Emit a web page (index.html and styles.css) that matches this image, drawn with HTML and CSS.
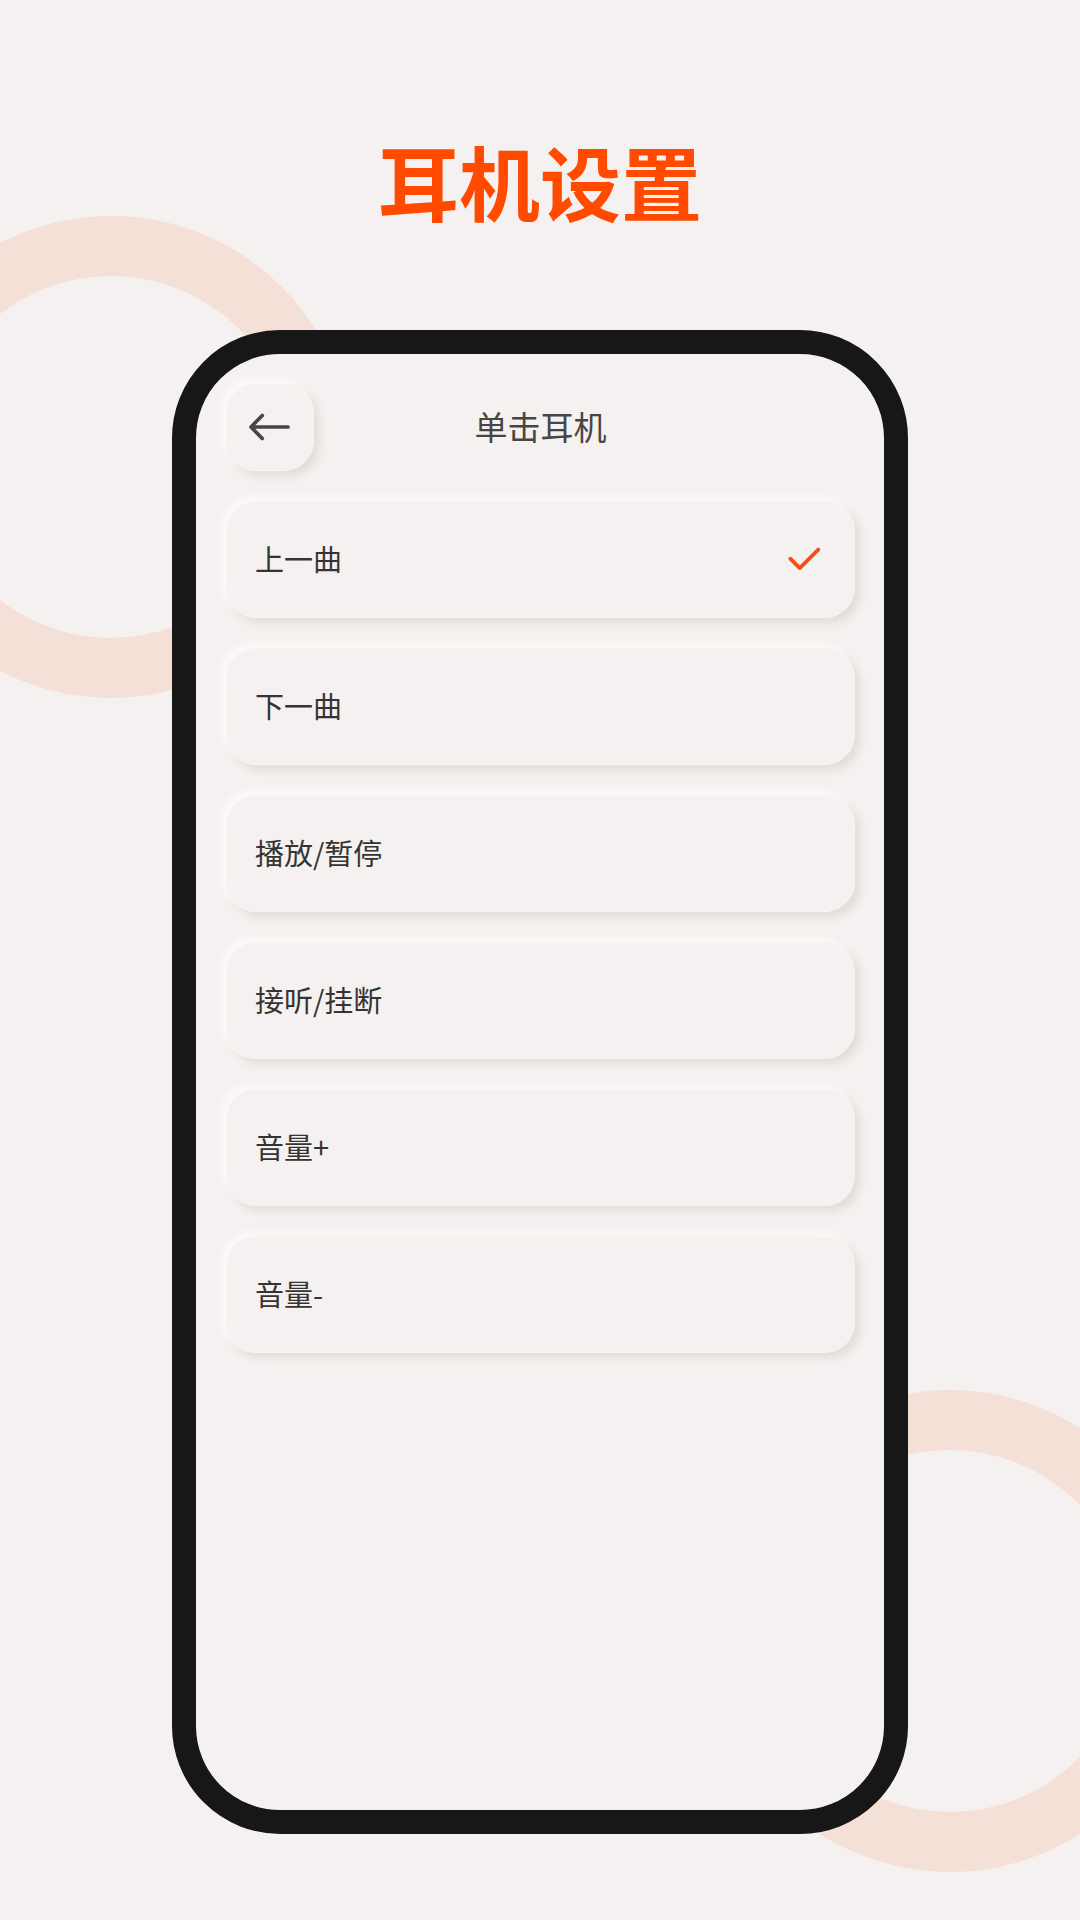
FILE: index.html
```html
<!DOCTYPE html>
<html lang="zh-CN">
<head>
  <meta charset="UTF-8" />
  <meta name="viewport" content="width=device-width, initial-scale=1.0"/>
  <title>耳机设置</title>
  <link rel="stylesheet" href="styles.css">
</head>
<body>
  <div class="page">
    <div class="ring ring-top"></div>
    <div class="ring ring-bottom"></div>

    <h1 class="page-title">耳机设置</h1>

    <main class="phone">
      <header class="top-bar">
        <button type="button" class="back-btn" aria-label="返回">
          <svg width="44" height="32" viewBox="0 0 44 32" fill="none" stroke="#484644" stroke-width="3.7" stroke-linecap="round" stroke-linejoin="round">
            <path d="M40 16H3M14.3 4.5L3 16l11.3 11.5"/>
          </svg>
        </button>
        <h2>单击耳机</h2>
      </header>

      <form class="options">
        <label class="option">
          <input type="radio" name="action" value="prev" checked>
          <span>上一曲</span>
          <svg class="check" viewBox="0 0 36 36"><path d="M4.3 18.7l9.4 9.4L32.3 9.6"/></svg>
        </label>
        <label class="option">
          <input type="radio" name="action" value="next">
          <span>下一曲</span>
          <svg class="check" viewBox="0 0 36 36"><path d="M4.3 18.7l9.4 9.4L32.3 9.6"/></svg>
        </label>
        <label class="option">
          <input type="radio" name="action" value="play">
          <span>播放/暂停</span>
          <svg class="check" viewBox="0 0 36 36"><path d="M4.3 18.7l9.4 9.4L32.3 9.6"/></svg>
        </label>
        <label class="option">
          <input type="radio" name="action" value="call">
          <span>接听/挂断</span>
          <svg class="check" viewBox="0 0 36 36"><path d="M4.3 18.7l9.4 9.4L32.3 9.6"/></svg>
        </label>
        <label class="option">
          <input type="radio" name="action" value="volume-up">
          <span>音量+</span>
          <svg class="check" viewBox="0 0 36 36"><path d="M4.3 18.7l9.4 9.4L32.3 9.6"/></svg>
        </label>
        <label class="option">
          <input type="radio" name="action" value="volume-down">
          <span>音量-</span>
          <svg class="check" viewBox="0 0 36 36"><path d="M4.3 18.7l9.4 9.4L32.3 9.6"/></svg>
        </label>
      </form>
    </main>
  </div>
</body>
</html>
```

FILE: styles.css
```css
* {
  box-sizing: border-box;
}

body {
  margin: 0;
  font-family: "Noto Sans CJK SC", sans-serif;
  background-color: #f4f1f0;
}

.page {
  position: relative;
  display: flex;
  flex-direction: column;
  min-height: 100vh;
  padding: 120px 172px 86px;
  overflow: hidden;
}

/* decorative rings behind the phone */
.ring {
  position: absolute;
  width: 482px;
  height: 482px;
  border: 60px solid #f4e0d6;
  border-radius: 50%;
}

.ring-top {
  top: 216px;
  left: -130px;
}

.ring-bottom {
  bottom: 48px;
  right: -111px;
}

.page-title {
  margin: 0 0 90px;
  font-size: 81px;
  line-height: 120px;
  font-weight: bold;
  text-align: center;
  color: #ff4a00;
}

.phone {
  position: relative;
  flex: 1;
  padding: 29px 29px 29px 30px;
  border: 24px solid #171717;
  border-radius: 108px;
  background: #f4f1f0;
}

.top-bar {
  display: grid;
  grid-template-columns: 88px 1fr 88px;
  align-items: center;
  margin-bottom: 30px;
}

.top-bar h2 {
  margin: 0;
  padding-bottom: 3px;
  font-size: 33px;
  line-height: 48px;
  font-weight: normal;
  text-align: center;
  color: #484644;
}

.back-btn,
.option {
  border: 1px solid #f8f5f3;
  border-radius: 30px;
  background: #f4f1f0;
  box-shadow: -5px -5px 6px #fbf9f8, 5px 5px 8px #e2dcd9;
  cursor: pointer;
}

.back-btn {
  display: flex;
  align-items: center;
  justify-content: center;
  height: 88px;
  padding: 0;
}

.options {
  display: flex;
  flex-direction: column;
  gap: 30px;
}

.option {
  display: flex;
  align-items: center;
  justify-content: space-between;
  height: 117px;
  padding: 0 32px 4px 28px;
  font-size: 29px;
  line-height: 42px;
  color: #363432;
}

.option input {
  position: absolute;
  opacity: 0;
}

.check {
  display: none;
  width: 36px;
  height: 36px;
  fill: none;
  stroke: #f9500f;
  stroke-width: 3.8;
  stroke-linecap: round;
  stroke-linejoin: round;
}

.option input:checked ~ .check {
  display: block;
}
```
